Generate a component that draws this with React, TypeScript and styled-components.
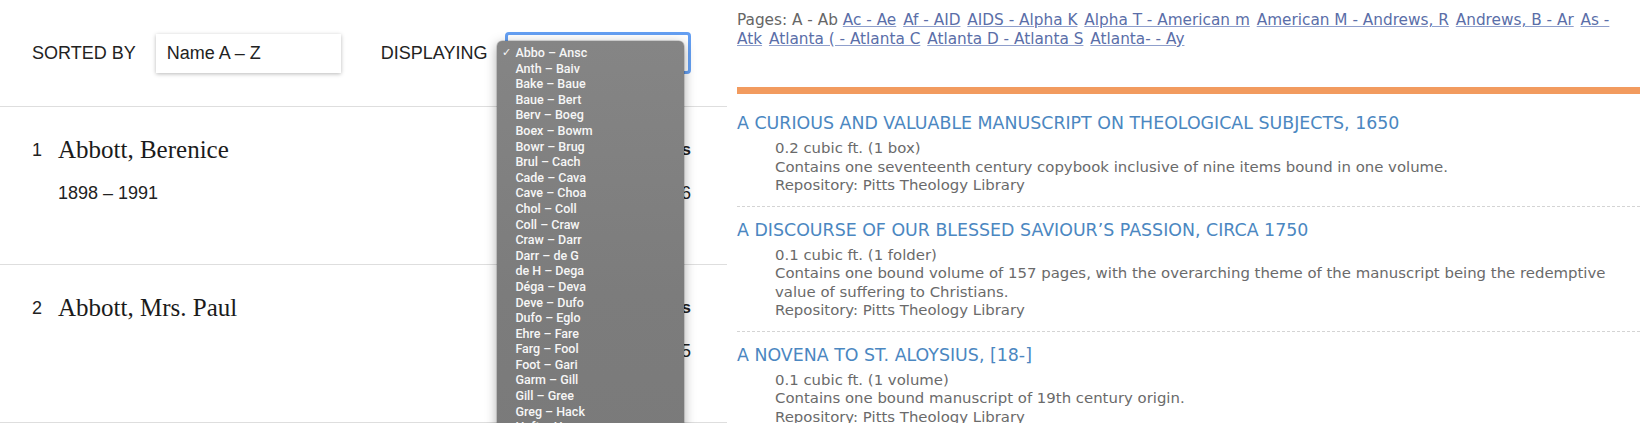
import React from 'react';
import styled, { createGlobalStyle } from 'styled-components';

const GlobalStyle = createGlobalStyle`
  html, body {
    margin: 0;
    padding: 0;
    background: #fff;
  }
  body {
    overflow: hidden;
  }
`;

const ranges = [
  'Abbo – Ansc', 'Anth – Baiv', 'Bake – Baue', 'Baue – Bert', 'Berv – Boeg', 'Boex – Bowm',
  'Bowr – Brug', 'Brul – Cach', 'Cade – Cava', 'Cave – Choa', 'Chol – Coll', 'Coll – Craw',
  'Craw – Darr', 'Darr – de G', 'de H – Dega', 'Déga – Deva', 'Deve – Dufo', 'Dufo – Eglo',
  'Ehre – Fare', 'Farg – Fool', 'Foot – Gari', 'Garm – Gill', 'Gill – Gree', 'Greg – Hack',
  'Haft – Harr', 'Harr – Hein',
];

const people = [
  { n: 1, name: 'Abbott, Berenice', dates: '1898 – 1991', kind: 'Berenice Abbott papers', count: 'Boxes 1 – 6' },
  { n: 2, name: 'Abbott, Mrs. Paul', dates: '', kind: 'Mrs. Paul Abbott letters', count: 'Boxes 1 – 5' },
];

const pageLinks = [
  'Ac - Ae', 'Af - AID', 'AIDS - Alpha K', 'Alpha T - American m', 'American M - Andrews, R',
  'Andrews, B - Ar', 'As - Atk', 'Atlanta ( - Atlanta C', 'Atlanta D - Atlanta S', 'Atlanta- - Ay',
];

const records = [
  {
    title: 'A CURIOUS AND VALUABLE MANUSCRIPT ON THEOLOGICAL SUBJECTS, 1650',
    extent: '0.2 cubic ft. (1 box)',
    note: 'Contains one seventeenth century copybook inclusive of nine items bound in one volume.',
  },
  {
    title: 'A DISCOURSE OF OUR BLESSED SAVIOUR’S PASSION, CIRCA 1750',
    extent: '0.1 cubic ft. (1 folder)',
    note: 'Contains one bound volume of 157 pages, with the overarching theme of the manuscript being the redemptive value of suffering to Christians.',
  },
  {
    title: 'A NOVENA TO ST. ALOYSIUS, [18-]',
    extent: '0.1 cubic ft. (1 volume)',
    note: 'Contains one bound manuscript of 19th century origin.',
  },
];

const Page = styled.div`
  display: flex;
  height: 423px;
  overflow: hidden;
  background: #fff;
`;

/* left screenshot: names index */

const NameIndex = styled.section`
  width: 727px;
  flex-shrink: 0;
  font-family: 'Liberation Sans', Arial, sans-serif;
  color: #222;
`;

const Toolbar = styled.div`
  height: 107px;
  box-sizing: border-box;
  display: flex;
  align-items: center;
  padding-left: 32px;
  border-bottom: 1px solid #dedede;
`;

const Label = styled.span<{ $gap: number }>`
  font-size: 18px;
  line-height: 22px;
  margin-right: ${p => p.$gap}px;
`;

const SortBox = styled.div`
  width: 185px;
  height: 39px;
  box-sizing: border-box;
  padding-left: 11px;
  display: flex;
  align-items: center;
  font-size: 18px;
  background: #fff;
  box-shadow: 0 1px 4px rgba(0, 0, 0, 0.28);
  margin-right: 40px;
`;

const DisplaySelect = styled.div`
  position: relative;
  width: 186px;
  height: 42px;
  box-sizing: border-box;
  border: 3px solid #649ff2;
  border-radius: 4px;
  background: #fff;
`;

const Menu = styled.ul`
  position: absolute;
  left: -11px;
  top: 6px;
  width: 187px;
  height: 420px;
  margin: 0;
  padding: 4px 0 0;
  list-style: none;
  box-sizing: border-box;
  border-radius: 5px;
  background: linear-gradient(180deg, #858585 0%, #7c7c7c 60%, #7a7a7a 100%);
  box-shadow: 0 3px 12px rgba(0, 0, 0, 0.35), 0 0 0 0.5px rgba(0, 0, 0, 0.25);
  z-index: 5;
  overflow: hidden;
`;

const MenuOption = styled.li<{ $checked?: boolean }>`
  position: relative;
  height: 15.6px;
  line-height: 15.6px;
  padding-left: 18px;
  font-family: Roboto, 'Liberation Sans', sans-serif;
  font-size: 12.5px;
  font-weight: 500;
  color: #f6f6f6;
  white-space: nowrap;

  &::before {
    content: ${p => (p.$checked ? "'✓'" : "''")};
    position: absolute;
    left: 5px;
    font-size: 11px;
  }
`;

const PersonRow = styled.div`
  height: 158px;
  box-sizing: border-box;
  display: flex;
  justify-content: space-between;
  padding: 28px 36px 0 32px;
  border-bottom: 1px solid #dedede;
`;

const NameBlock = styled.div`
  display: grid;
  grid-template-columns: 26px auto;
  row-gap: 17px;
  align-content: start;
`;

const Num = styled.span`
  font-size: 18px;
  line-height: 30px;
`;

const PersonName = styled.span`
  font-family: 'Liberation Serif', 'Times New Roman', serif;
  font-size: 25px;
  line-height: 30px;
  color: #1b1b1b;
`;

const Dates = styled.span`
  grid-column: 2;
  font-size: 18px;
  line-height: 22px;
`;

const Holdings = styled.div`
  display: flex;
  flex-direction: column;
  align-items: flex-end;
  gap: 17px;
`;

const HoldingKind = styled.span`
  font-size: 17px;
  font-weight: 700;
  line-height: 30px;
`;

const HoldingCount = styled.span`
  font-size: 18px;
  line-height: 22px;
`;

/* right screenshot: finding aid list */

const FindingAids = styled.section`
  flex: 1;
  min-width: 0;
  margin-left: 10px;
  font-family: 'DejaVu Sans', Verdana, sans-serif;
  color: #666;
`;

const PagesNav = styled.div`
  padding: 11px 25px 0 0;
  font-size: 15.3px;
  line-height: 19px;
`;

const PageLink = styled.a`
  color: #5a6ea8;
  margin-right: 2px;
  text-decoration: underline;
  text-decoration-color: #8f9fcc;
`;

const Rule = styled.div`
  height: 7px;
  margin: 38px 0 6px;
  background: #f29b5f;
`;

const Record = styled.div`
  padding: 12px 0 11px;
  border-bottom: 1px dashed #d4d4d4;

  &:last-child {
    border-bottom: none;
  }
`;

const RecordTitle = styled.div`
  font-size: 17.4px;
  line-height: 22px;
  color: #4b87c1;
`;

const RecordBody = styled.div`
  margin: 5px 20px 0 38px;
  font-size: 14.9px;
  line-height: 18.5px;
  color: #6a6a6a;
`;

export default function App() {
  return (
    <>
      <GlobalStyle />
      <Page>
        <NameIndex>
          <Toolbar>
            <Label $gap={20}>SORTED BY</Label>
            <SortBox>Name A – Z</SortBox>
            <Label $gap={18}>DISPLAYING</Label>
            <DisplaySelect>
              <Menu>
                {ranges.map((r, i) => (
                  <MenuOption key={r} $checked={i === 0}>{r}</MenuOption>
                ))}
              </Menu>
            </DisplaySelect>
          </Toolbar>
          {people.map(p => (
            <PersonRow key={p.n}>
              <NameBlock>
                <Num>{p.n}</Num>
                <PersonName>{p.name}</PersonName>
                {p.dates && <Dates>{p.dates}</Dates>}
              </NameBlock>
              <Holdings>
                <HoldingKind>{p.kind}</HoldingKind>
                <HoldingCount>{p.count}</HoldingCount>
              </Holdings>
            </PersonRow>
          ))}
        </NameIndex>

        <FindingAids>
          <PagesNav>
            Pages: A - Ab{' '}
            {pageLinks.map(l => (
              <React.Fragment key={l}>
                <PageLink href="#">{l}</PageLink>{' '}
              </React.Fragment>
            ))}
          </PagesNav>
          <Rule />
          {records.map(r => (
            <Record key={r.title}>
              <RecordTitle>{r.title}</RecordTitle>
              <RecordBody>
                <div>{r.extent}</div>
                <div>{r.note}</div>
                <div>Repository: Pitts Theology Library</div>
              </RecordBody>
            </Record>
          ))}
        </FindingAids>
      </Page>
    </>
  );
}
